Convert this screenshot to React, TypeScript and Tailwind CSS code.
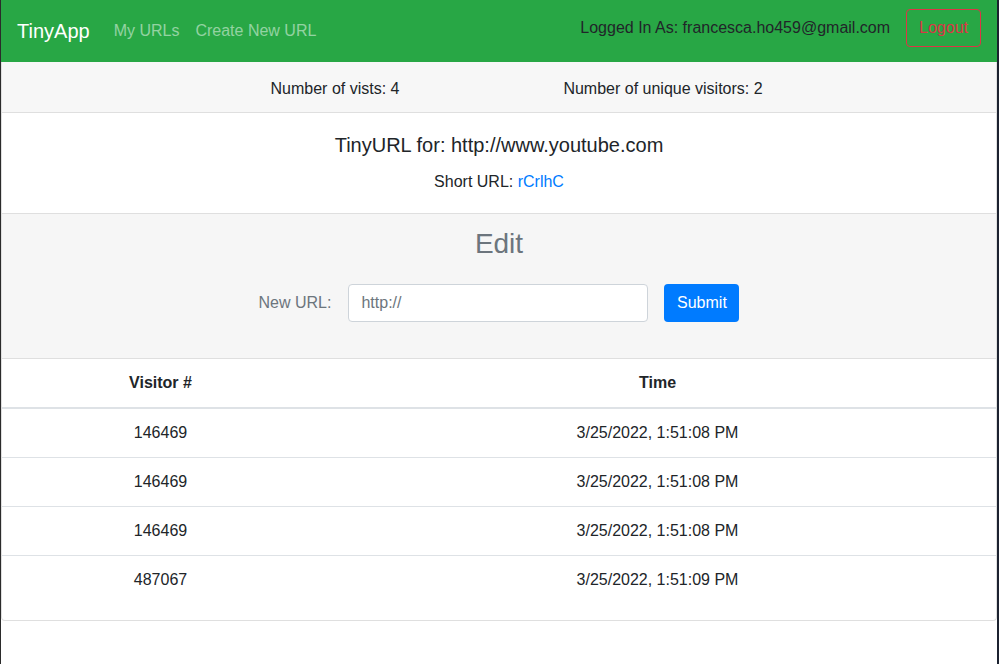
const visits = [
  { id: '146469', time: '3/25/2022, 1:51:08 PM' },
  { id: '146469', time: '3/25/2022, 1:51:08 PM' },
  { id: '146469', time: '3/25/2022, 1:51:08 PM' },
  { id: '487067', time: '3/25/2022, 1:51:09 PM' },
];

export default function App() {
  return (
    <div className="flex h-[664px] w-[999px] overflow-hidden bg-white text-[#212529] font-['Liberation_Sans',Arial,sans-serif]">
      <div className="w-px shrink-0 bg-[#2b2b2b]" />
      <div className="flex flex-1 flex-col">
        <nav className="flex h-[62px] items-center bg-[#28a745] pl-4 pr-4">
          <span className="mr-4 text-[20px] leading-[30px] text-white">TinyApp</span>
          <a className="px-2 text-base text-white/50">My URLs</a>
          <a className="px-2 text-base text-white/50">Create New URL</a>
          <div className="mb-[6px] ml-auto flex items-center gap-4">
            <span className="text-base text-[#212529]">Logged In As: francesca.ho459@gmail.com</span>
            <button className="h-[38px] rounded border border-[#dc3545] px-3 text-base text-[#dc3545]">Logout</button>
          </div>
        </nav>

        <div className="rounded-b border-x border-b border-[#dfdfdf]">
          <div className="flex h-[51px] items-center justify-center border-b border-[#dfdfdf] bg-[#f7f7f7] pt-1">
            <div className="w-[328px] text-center text-base">Number of vists: 4</div>
            <div className="w-[328px] text-center text-base">Number of unique visitors: 2</div>
          </div>

          <div className="flex h-[100px] flex-col items-center pt-[17px]">
            <h2 className="text-[20px] leading-[30px]">TinyURL for: http://www.youtube.com</h2>
            <p className="mt-[10px] text-base leading-6">
              Short URL: <a className="text-[#007bff]">rCrlhC</a>
            </p>
          </div>

          <div className="flex h-[146px] flex-col items-center border-y border-[#dfdfdf] bg-[#f6f6f6] pt-[13px]">
            <h3 className="text-[28px] leading-[34px] text-[#6c757d]">Edit</h3>
            <form className="mt-[23px] flex items-center">
              <label className="mr-[17px] text-base text-[#6c757d]">New URL:</label>
              <input
                className="h-[38px] w-[300px] rounded border border-[#ced4da] bg-white px-3 text-base placeholder:text-[#6c757d]"
                placeholder="http://"
              />
              <button type="button" className="ml-4 h-[38px] w-[75px] rounded bg-[#007bff] text-base text-white">
                Submit
              </button>
            </form>
          </div>

          <table className="mb-4 w-full border-collapse text-base">
            <thead>
              <tr className="border-b-2 border-[#dee2e6]">
                <th className="w-[317px] py-3 text-center font-bold leading-6">Visitor #</th>
                <th className="py-3 text-center font-bold leading-6">Time</th>
              </tr>
            </thead>
            <tbody>
              {visits.map((v, i) => (
                <tr key={i} className={i > 0 ? 'border-t border-[#dee2e6]' : ''}>
                  <td className="py-3 text-center leading-6">{v.id}</td>
                  <td className="py-3 text-center leading-6">{v.time}</td>
                </tr>
              ))}
            </tbody>
          </table>
        </div>
      </div>
      <div className="w-[2px] shrink-0 bg-[#1c2230]" />
    </div>
  );
}
